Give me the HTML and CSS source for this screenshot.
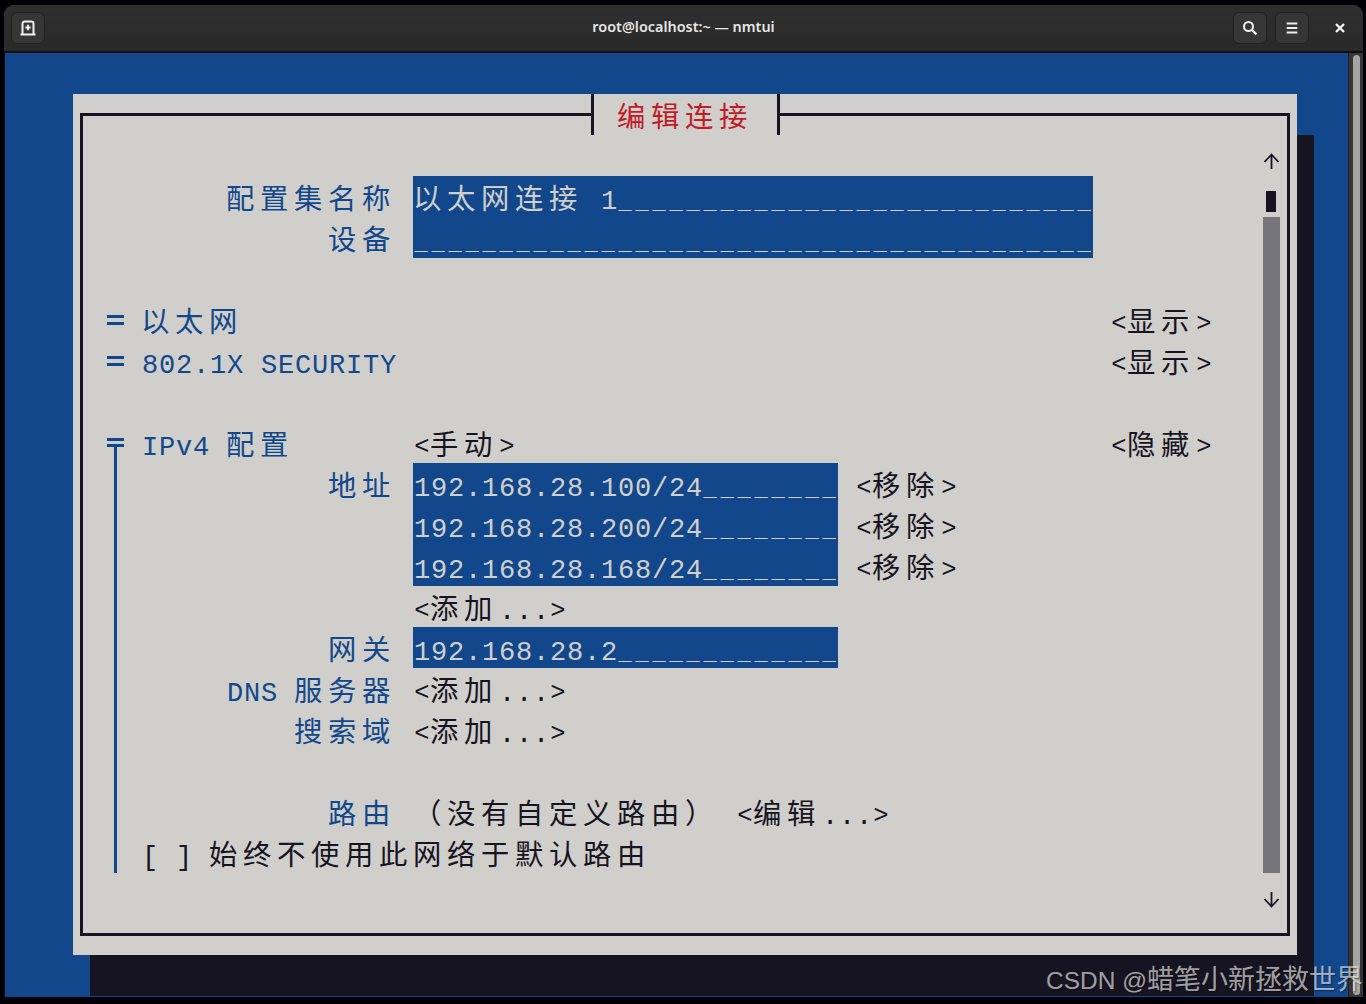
FILE: index.html
```html
<!DOCTYPE html>
<html lang="zh-CN">
<head>
<meta charset="utf-8">
<title>root@localhost:~ — nmtui</title>
<link rel="stylesheet" href="styles.css">
</head>
<body>
<div class="window">
  <header class="headerbar">
    <button class="hbtn" aria-label="New tab">
      <svg width="16" height="16" viewBox="0 0 16 16"><path class="ic-s" d="M2.5 14V3.5a2 2 0 0 1 2-2h7a2 2 0 0 1 2 2V14"/><path class="ic-s" d="M0.5 14.5h15"/><path class="ic-s" d="M8 4.8v5.4M5.3 7.5h5.4"/></svg>
    </button>
    <div class="wintitle">root@localhost:~ — nmtui</div>
    <div class="hactions">
      <button class="hbtn" aria-label="Search">
        <svg width="16" height="16" viewBox="0 0 16 16"><circle class="ic-s" cx="6.5" cy="6.5" r="4.5"/><path class="ic-s ic-w" d="M10 10l4.4 4.4"/></svg>
      </button>
      <button class="hbtn" aria-label="Menu">
        <svg width="16" height="16" viewBox="0 0 16 16"><path class="ic-s" d="M2.7 3.5h10.6M2.7 8h10.6M2.7 12.5h10.6"/></svg>
      </button>
      <button class="hclose" aria-label="Close">
        <svg width="12" height="12" viewBox="0 0 12 12"><path class="ic-s ic-w" d="M2 2l8 8M10 2l-8 8"/></svg>
      </button>
    </div>
  </header>
  <div class="termarea">
    <main class="terminal">
      <section class="dialog">
        <div class="frame">
          <h1 class="dtitle">编辑连接</h1>
          <div class="form">
            <div class="row"><span class="label">配置集名称</span><span class="fields"><span class="field wide">以太网连接<span class="m"> 1</span><span class="us">____________________________</span></span></span></div>
            <div class="row"><span class="label">设备</span><span class="fields"><span class="field wide"><span class="us">________________________________________</span></span></span></div>
            <div class="row"></div>
            <div class="row"><span class="mark"></span><span class="title">以太网</span><span class="act"><span class="b">&lt;</span>显示<span class="b">&gt;</span></span></div>
            <div class="row"><span class="mark"></span><span class="title"><span class="m">802.1X SECURITY</span></span><span class="act"><span class="b">&lt;</span>显示<span class="b">&gt;</span></span></div>
            <div class="row"></div>
            <div class="ipv4">
              <div class="row"><span class="mark open"></span><span class="title"><span class="m">IPv4 </span>配置</span><span class="fields plain"><span class="b">&lt;</span>手动<span class="b">&gt;</span></span><span class="act"><span class="b">&lt;</span>隐藏<span class="b">&gt;</span></span></div>
              <div class="row"><span class="label">地址</span><span class="fields"><span class="field short"><span class="m">192.168.28.100/24</span><span class="us">________</span></span><span class="plain"><span class="b">&lt;</span>移除<span class="b">&gt;</span></span></span></div>
              <div class="row"><span class="label"></span><span class="fields"><span class="field short"><span class="m">192.168.28.200/24</span><span class="us">________</span></span><span class="plain"><span class="b">&lt;</span>移除<span class="b">&gt;</span></span></span></div>
              <div class="row"><span class="label"></span><span class="fields"><span class="field short"><span class="m">192.168.28.168/24</span><span class="us">________</span></span><span class="plain"><span class="b">&lt;</span>移除<span class="b">&gt;</span></span></span></div>
              <div class="row"><span class="label"></span><span class="fields plain"><span class="b">&lt;</span>添加<span class="m">...</span><span class="b">&gt;</span></span></div>
              <div class="row"><span class="label">网关</span><span class="fields"><span class="field short"><span class="m">192.168.28.2</span><span class="us">_____________</span></span></span></div>
              <div class="row"><span class="label"><span class="m">DNS </span>服务器</span><span class="fields plain"><span class="b">&lt;</span>添加<span class="m">...</span><span class="b">&gt;</span></span></div>
              <div class="row"><span class="label">搜索域</span><span class="fields plain"><span class="b">&lt;</span>添加<span class="m">...</span><span class="b">&gt;</span></span></div>
              <div class="row"></div>
              <div class="row"><span class="label">路由</span><span class="fields plain">（没有自定义路由）<span class="m"> </span><span class="b">&lt;</span>编辑<span class="m">...</span><span class="b">&gt;</span></span></div>
              <div class="row"><span class="check"><span class="m">[ ] </span>始终不使用此网络于默认路由</span></div>
            </div>
          </div>
          <aside class="scroll">
            <svg class="arrow" width="17" height="41" viewBox="0 0 17 41"><path class="arrow-s" d="M8.5 34V20M1.5 27l7-7.5 7 7.5"/></svg>
            <span class="thumbcell"><span class="thumb"></span></span>
            <span class="track"></span>
            <svg class="arrow" width="17" height="41" viewBox="0 0 17 41"><path class="arrow-s" d="M8.5 19v14M1.5 26l7 7.5 7-7.5"/></svg>
          </aside>
        </div>
      </section>
    </main>
    <div class="vscroll"><div class="vthumb"></div></div>
  </div>
</div>
<div class="watermark">CSDN @<span class="wz">蜡笔小新拯救世界</span></div>
</body>
</html>
```
FILE: styles.css
```css
* { box-sizing: border-box; }
html, body { margin: 0; height: 1004px; overflow: hidden; }
body { background: #000006; position: relative; }

.window {
  margin: 5px 3px 0 4px;
  height: 992px;
  display: flex;
  flex-direction: column;
  border-radius: 10px 10px 0 0;
  overflow: hidden;
  background: #2b2b2b;
}

.headerbar {
  height: 48px;
  flex: none;
  display: flex;
  align-items: center;
  justify-content: space-between;
  position: relative;
  padding: 0 0 1px 7px;
  background: linear-gradient(#2f2f2f, #292929);
  border-bottom: 2px solid #0f0f0f;
}
.wintitle {
  position: absolute;
  left: 0;
  right: 0;
  top: 13px;
  text-align: center;
  font: 600 14.4px/18px "Noto Sans", sans-serif;
  color: #e6e6e6;
}
.hactions { display: flex; align-items: center; gap: 8px; }
.hbtn {
  width: 34px;
  height: 32px;
  padding: 0;
  display: flex;
  align-items: center;
  justify-content: center;
  background: #363636;
  border: 1px solid #1f1f1f;
  border-radius: 6px;
}
.hclose {
  width: 46px;
  height: 32px;
  padding: 0;
  display: flex;
  align-items: center;
  justify-content: center;
  background: none;
  border: 0;
}
.ic-s { fill: none; stroke: #f0f0f0; stroke-width: 2; }
.ic-w { stroke-width: 2.4; }

.termarea { flex: 1; display: flex; min-height: 0; padding-left: 1px; background: #111; }
.terminal { flex: 1; background: #12488b; padding: 41px 0 0 68px; }
.vscroll { width: 15px; flex: none; background: #353535; padding: 2px 3px 2px 4px; border-left: 1px solid #222; }
.vthumb { height: 100%; border-radius: 4px; background: #a4a4a1; }

.dialog {
  width: 1224px;
  height: 861px;
  background: #d0cfcc;
  box-shadow: 17px 41px 0 #171421;
  padding: 19px 7px 19px 7px;
  font: 28.33px/41px "Noto Sans CJK SC", sans-serif;
  letter-spacing: 5.67px;
  color: #171421;
}
.frame {
  height: 100%;
  border: 3px solid #171421;
  display: flex;
  position: relative;
}
.dtitle {
  position: absolute;
  left: 508px;
  top: -22px;
  width: 189px;
  height: 41px;
  margin: 0;
  padding-left: 23px;
  background: #d0cfcc;
  border-left: 3px solid #171421;
  border-right: 3px solid #171421;
  color: #c01c28;
  font: inherit;
  white-space: pre;
}
.m {
  font-family: "Liberation Mono", monospace;
  font-size: 27px;
  letter-spacing: 0.8px;
  margin: 0 -1px 0 1px;
}
.b {
  font-family: "Liberation Mono", monospace;
  font-size: 25.5px;
  letter-spacing: 1.7px;
  margin: 0 -1.2px 0 1.2px;
  vertical-align: 1px;
}
.us {
  font: bold 22px "Liberation Mono", monospace;
  letter-spacing: 3.8px;
  margin: 0 -1.5px 0 1.5px;
}

.form { width: 1180px; flex: none; padding-top: 60px; }
.row {
  display: grid;
  grid-template-columns: 24px 17px 17px 255px 17px 1fr auto;
  height: 41px;
  padding-right: 51px;
  white-space: pre;
}
.mark {
  grid-column: 2;
  height: 10px;
  margin-top: 16px;
  border-top: 3px solid #12488b;
  border-bottom: 3px solid #12488b;
}
.mark.open { height: 9px; }
.title { grid-column: 4; color: #12488b; }
.label { grid-column: 1 / 5; text-align: right; color: #12488b; }
.fields { grid-column: 6; display: flex; gap: 17px; }
.fields.plain { display: block; }
.act { grid-column: 7; }
.field { background: #12488b; color: #d0cfcc; height: 41px; }
.field.wide { width: 680px; }
.field.short { width: 425px; }
.check { grid-column: 4 / 8; }

.ipv4 { position: relative; }
.ipv4::before {
  content: "";
  position: absolute;
  left: 31px;
  top: 22px;
  bottom: 0;
  width: 3px;
  background: #12488b;
}

.scroll { width: 17px; flex: none; padding-top: 19px; display: flex; flex-direction: column; }
.arrow { display: block; height: 41px; flex: none; }
.arrow-s { fill: none; stroke: #171421; stroke-width: 1.8; }
.thumbcell { height: 41px; flex: none; display: flex; align-items: flex-end; justify-content: center; }
.thumb { width: 10px; height: 21px; margin: 0 1px 5px 0; background: #171421; }
.track { height: 656px; flex: none; background: #767579; }

.watermark {
  position: absolute;
  left: 1046px;
  top: 959px;
  font: 24.5px/38px "Liberation Sans", "Noto Sans CJK SC", sans-serif;
  color: rgba(255, 255, 255, 0.62);
  text-shadow: 1px 1px 1px rgba(0, 0, 0, 0.4);
  white-space: nowrap;
}
.wz { font-family: "Noto Sans CJK SC", sans-serif; font-size: 27px; }
```
